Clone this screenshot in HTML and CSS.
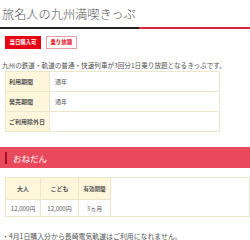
FILE: index.html
```html
<!DOCTYPE html>
<html lang="ja">
<head>
  <meta charset="UTF-8">
  <title>旅名人の九州満喫きっぷ</title>
  <link rel="stylesheet" href="styles.css">
</head>
<body>
  <div class="title-bar">
    <h1 class="title">旅名人の九州満喫きっぷ</h1>
  </div>

  <div class="badges">
    <span class="badge badge-fill">当日購入可</span>
    <span class="badge">乗り放題</span>
  </div>

  <p class="lead">九州の鉄道・軌道の普通・快速列車が3回分1日乗り放題となるきっぷです。</p>

  <table class="info">
    <tr><th>利用期間</th><td>通年</td></tr>
    <tr><th>発売期間</th><td>通年</td></tr>
    <tr><th>ご利用除外日</th><td></td></tr>
  </table>

  <h2 class="section-head">おねだん</h2>

  <div class="price-wrap">
    <table class="price">
      <tr><th>大人</th><th>こども</th><th class="small">有効期間</th></tr>
      <tr><td>12,000円</td><td>12,000円</td><td>3ヵ月</td></tr>
    </table>
  </div>

  <p class="note">・4月1日購入分から長崎電気軌道はご利用になれません。</p>
</body>
</html>
```

FILE: styles.css
```css
body {
  margin: 0;
  padding: 0;
  font-family: "Noto Sans CJK JP", "Noto Sans", sans-serif;
  color: #555;
  background: #fff;
}
.title-bar {
  border-bottom: 2px solid #d42a3c;
}
.title {
  display: inline-block;
  margin: 2px 0 -2px 0;
  padding: 0 3px 4px 2px;
  font-size: 12.2px;
  line-height: 18px;
  font-weight: 300;
  color: #555;
  border-bottom: 2px solid #222;
}
.badges {
  display: flex;
  gap: 5px;
  margin: 7px 0 0 5px;
}
.badge {
  display: inline-block;
  height: 11px;
  line-height: 11px;
  padding: 0 3.5px;
  font-size: 5.4px;
  font-weight: bold;
  color: #e60012;
  border: 1px solid #e8a0a8;
  background: #fff;
}
.badge-fill {
  background: #e60012;
  border-color: #e60012;
  color: #fff;
}
.lead {
  margin: 11px 0 0 2px;
  font-size: 6.6px;
  line-height: 10px;
  color: #555;
}
table {
  border-collapse: collapse;
}
.info {
  margin: 1px 0 0 5px;
  width: 215px;
}
.info th,
.info td {
  border: 1px solid #ece6cc;
  font-size: 6px;
  text-align: left;
  height: 19px;
  padding: 0;
}
.info th {
  width: 40px;
  padding-left: 3px;
  background: #fff6db;
  font-weight: bold;
  color: #555;
}
.info td {
  padding-left: 5px;
  color: #555;
}
.section-head {
  margin: 15px 0 0 0;
  height: 21px;
  display: flex;
  align-items: center;
  background: #e94a5b;
  color: #fff;
  font-size: 8.5px;
  font-weight: normal;
  padding-left: 5px;
}
.section-head::before {
  content: "";
  width: 2px;
  height: 12px;
  background: #a8101e;
  margin-right: 6px;
}
.price-wrap {
  margin: 9px 0 0 5px;
  border: 1px solid #ece6cc;
  border-left: none;
}
.price th,
.price td {
  border: 1px solid #ece6cc;
  text-align: center;
  font-size: 6px;
  padding: 0;
  color: #555;
}
.price tr:first-child th {
  border-top: none;
}
.price tr:last-child td {
  border-bottom: none;
}
.price th {
  height: 21px;
  background: #fff6db;
  font-weight: bold;
}
.price th:nth-child(1) { width: 34px; }
.price th:nth-child(2) { width: 37px; }
.price th:nth-child(3) { width: 31px; }
.price th.small {
  font-size: 5.5px;
}
.price td {
  height: 16px;
}
.note {
  margin: 14px 0 0 2px;
  font-size: 6.9px;
  line-height: 10px;
  color: #555;
}
```
